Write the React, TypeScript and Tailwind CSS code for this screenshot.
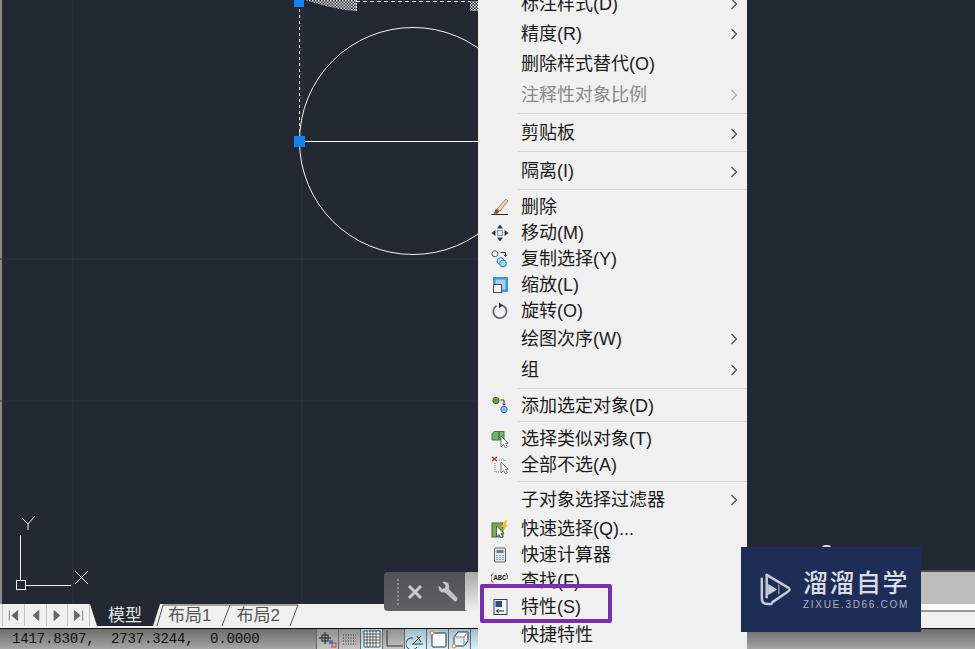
const cjk = "font-['Liberation_Sans','Noto_Sans_CJK_SC',sans-serif]";

type Row = { label: string; h: string; icon?: string; arrow?: boolean; dim?: boolean };

// row heights differ through the menu, same as the source app
const sections: { gap: string; rows: Row[] }[] = [
  {
    gap: "pb-[3px]",
    rows: [
      { label: "标注样式(D)", h: "h-[30px]", arrow: true },
      { label: "精度(R)", h: "h-[30px]", arrow: true },
      { label: "删除样式替代(O)", h: "h-[31px]" },
      { label: "注释性对象比例", h: "h-[30px]", arrow: true, dim: true },
    ],
  },
  { gap: "", rows: [{ label: "剪贴板", h: "h-[37px] pt-[2px]", arrow: true }] },
  { gap: "", rows: [{ label: "隔离(I)", h: "h-[37px] pt-[2px]", arrow: true }] },
  {
    gap: "pt-[4px] pb-[2px]",
    rows: [
      { label: "删除", h: "h-[26px]", icon: "erase" },
      { label: "移动(M)", h: "h-[26px]", icon: "move" },
      { label: "复制选择(Y)", h: "h-[26px]", icon: "copy" },
      { label: "缩放(L)", h: "h-[26px]", icon: "scale" },
      { label: "旋转(O)", h: "h-[26px]", icon: "rotate" },
      { label: "绘图次序(W)", h: "h-[30px]", arrow: true },
      { label: "组", h: "h-[32px]", arrow: true },
    ],
  },
  { gap: "", rows: [{ label: "添加选定对象(D)", h: "h-[32px] pt-[2px]", icon: "add" }] },
  {
    gap: "pt-[4px] pb-[3px]",
    rows: [
      { label: "选择类似对象(T)", h: "h-[26px]", icon: "similar" },
      { label: "全部不选(A)", h: "h-[26px]", icon: "none" },
    ],
  },
  {
    gap: "",
    rows: [
      { label: "子对象选择过滤器", h: "h-[34px] pt-[2px]", arrow: true },
      { label: "快速选择(Q)...", h: "h-[26px]", icon: "quick" },
      { label: "快速计算器", h: "h-[26px]", icon: "calc" },
      { label: "查找(F)...", h: "h-[26px]", icon: "find" },
      { label: "特性(S)", h: "h-[26px]", icon: "props" },
      { label: "快捷特性", h: "h-[30px]" },
    ],
  },
];

const cursor = "M10 6 V17 L12.5 14.5 L14.5 17.8 L16.3 16.8 L14.5 13.6 L17.2 13.2 Z";

function MenuIcon({ name }: { name: string }) {
  const cls = "w-[18px] h-[18px]";
  if (name === "erase")
    return (
      <svg viewBox="0 0 18 18" className={cls}>
        <path d="M6 11 L15 1 L17 3 L9 13 Z" fill="#e4d6ba" stroke="#8d7a58" strokeWidth="0.8" />
        <path d="M5 10.5 L8.5 13.5 L6 16 L2.5 15.5 Z" fill="#b4481f" />
        <path d="M0.5 16.5 H17" stroke="#2c2c2c" strokeWidth="1" />
      </svg>
    );
  if (name === "move")
    return (
      <svg viewBox="0 0 18 18" className={cls}>
        <path d="M9 0.5 L12 4.5 H6 Z M9 17.5 L6 13.5 H12 Z M0.5 9 L4.5 6 V12 Z M17.5 9 L13.5 12 V6 Z" fill="#2f3740" />
        <rect x="6.5" y="6.5" width="5" height="5" fill="#e4e8ec" stroke="#47525d" strokeDasharray="1.2 0.8" />
      </svg>
    );
  if (name === "copy")
    return (
      <svg viewBox="0 0 18 18" className={cls}>
        <circle cx="4" cy="3.8" r="3" fill="#f4f4f4" stroke="#5a6570" />
        <path d="M9.5 2.5 H14.5 V6 M13 4.8 L14.5 6.5 L16 4.8" fill="none" stroke="#333" />
        <circle cx="9.5" cy="11" r="3.4" fill="#cfe6f8" stroke="#2a78c2" />
        <circle cx="12" cy="13.5" r="3.4" fill="#a8d2f2" stroke="#2a78c2" />
      </svg>
    );
  if (name === "scale")
    return (
      <svg viewBox="0 0 18 18" className={cls}>
        <rect x="2" y="1" width="15" height="15" fill="#3d97dc" />
        <rect x="4.5" y="3.5" width="10" height="10" fill="#a9d2f0" />
        <rect x="2.5" y="8.5" width="8" height="8" fill="#f6f6f6" stroke="#3f4a55" />
      </svg>
    );
  if (name === "rotate")
    return (
      <svg viewBox="0 0 18 18" className={cls}>
        <path d="M5.5 3.8 A6.6 6.6 0 1 0 12 3.6" fill="none" stroke="#606970" strokeWidth="1.8" />
        <path d="M8 0.5 L12.5 3.6 L8 6 Z" fill="#30373d" />
      </svg>
    );
  if (name === "add")
    return (
      <svg viewBox="0 0 18 18" className={cls}>
        <circle cx="5" cy="3.5" r="3.2" fill="#6a9a4c" stroke="#46702f" />
        <circle cx="13" cy="12.5" r="3.2" fill="#7dbbea" stroke="#2a78c2" />
        <path d="M9.5 3 H13 V8 M11.6 6.6 L13 8.4 L14.4 6.6" fill="none" stroke="#333" />
      </svg>
    );
  if (name === "similar")
    return (
      <svg viewBox="0 0 18 18" className={cls}>
        <path d="M1 4 L3 1.5 H13 V10 H1 Z" fill="#72b36c" stroke="#3f7a3b" />
        <path d="M8 2 V10" stroke="#2f5d2c" />
        <path d={cursor} fill="#fff" stroke="#555" strokeWidth="0.8" />
      </svg>
    );
  if (name === "none")
    return (
      <svg viewBox="0 0 18 18" className={cls}>
        <path d="M1 1 L6 5 M6 1 L1 5" stroke="#c8242c" strokeWidth="1.4" />
        <path d="M4 7 V16 H9 M8 4 H14 V6" fill="none" stroke="#5f9a4a" strokeDasharray="1 1" />
        <path d={cursor} fill="#fff" stroke="#555" strokeWidth="0.8" />
      </svg>
    );
  if (name === "quick")
    return (
      <svg viewBox="0 0 18 18" className={cls}>
        <rect x="1" y="3" width="11" height="14" fill="#7fa65a" stroke="#47682f" />
        <path d="M13.5 0.5 L10.5 7 H13 L11.5 11 L17 5 H14.5 L16.5 0.5 Z" fill="#efc23a" />
        <path d="M5.5 6 V17 L8 14.5 L10 17.8 L11.8 16.8 L10 13.6 L12.7 13.2 Z" fill="#fff" stroke="#444" strokeWidth="0.8" />
      </svg>
    );
  if (name === "calc")
    return (
      <svg viewBox="0 0 18 18" className={cls}>
        <rect x="3.5" y="2" width="11" height="14" rx="1" fill="#e8ebee" stroke="#5b646d" />
        <rect x="5.5" y="4" width="7" height="3" fill="#6f7a84" />
        <path d="M5.5 9.5 H12.5 M5.5 11.5 H12.5 M5.5 13.5 H12.5" stroke="#4d565f" strokeDasharray="1 2" />
      </svg>
    );
  if (name === "find")
    return (
      <svg viewBox="0 0 18 18" className={cls}>
        <path d="M2.5 1 A6 6 0 0 0 2.5 11" fill="none" stroke="#444" />
        <path d="M15 1 A6 6 0 0 1 16 7" fill="none" stroke="#444" />
        <text x="2.5" y="8" fontSize="7" fontWeight="700" fill="#222" fontFamily="Liberation Mono">ABC</text>
      </svg>
    );
  return (
    <svg viewBox="0 0 18 18" className={cls}>
      <rect x="3" y="1.5" width="13" height="15" fill="#f3f5f8" stroke="#33415a" />
      <rect x="4.5" y="3" width="6.5" height="6" fill="#2d4a86" />
      <path d="M5.5 13 H13 M5.5 13 L7.5 11.5 M5.5 13 L7.5 14.5" fill="none" stroke="#222" />
    </svg>
  );
}

function MenuRow({ row }: { row: Row }) {
  return (
    <div className={`flex items-center ${row.h}`}>
      <div className="w-[43px] flex justify-center">{row.icon ? <MenuIcon name={row.icon} /> : null}</div>
      <span className={`flex-1 text-[18px] whitespace-nowrap ${row.dim ? "text-[#8a8a8a]" : ""}`}>{row.label}</span>
      {row.arrow ? (
        <svg viewBox="0 0 8 12" className="mr-[9px] w-[8px] h-[12px]">
          <path d="M1.5 1 L6.5 6 L1.5 11" fill="none" stroke={row.dim ? "#aaa" : "#4a4a4a"} strokeWidth="1.2" />
        </svg>
      ) : null}
    </div>
  );
}

function Menu() {
  return (
    <div className="absolute left-[478px] top-0 w-[269px] h-[649px] bg-[#f0f0f0] text-[#1c1c1c] overflow-hidden">
      <div className="-mt-[11px] flex flex-col">
        {sections.map((s, i) => (
          <div key={i} className="flex flex-col">
            {i > 0 ? <div className="ml-[40px] h-px bg-[#d6d6d6]" /> : null}
            <div className={`flex flex-col ${s.gap}`}>
              {s.rows.map((r) => (
                <MenuRow key={r.label} row={r} />
              ))}
            </div>
          </div>
        ))}
      </div>
    </div>
  );
}

function Drawing() {
  return (
    <svg className="absolute left-0 top-0 w-[478px] h-[604px]" viewBox="0 0 478 604">
      <defs>
        <pattern id="hatch" width="3" height="3" patternUnits="userSpaceOnUse">
          <rect width="3" height="3" fill="#222933" />
          <rect width="1.5" height="1.5" fill="#f0f0f0" />
          <rect x="1.5" y="1.5" width="1.5" height="1.5" fill="#e0e0e0" />
        </pattern>
      </defs>
      <rect x="0" y="0" width="2" height="604" fill="#8c8c8c" />
      <path d="M73 0 V604 M302 0 V604 M0 259 H478 M0 401 H478" stroke="#2c343e" strokeWidth="1" />
      <circle cx="413" cy="141" r="113.5" fill="none" stroke="#f2f2f2" strokeWidth="1" />
      <path d="M300 141.5 H478" stroke="#f5f5f5" strokeWidth="1.2" />
      <path d="M299.5 3 V141" stroke="#f2f2f2" strokeDasharray="3 3" />
      <path d="M356 1.5 H470" stroke="#f2f2f2" strokeDasharray="4 3" />
      <path d="M305 0 H356 V11 L345 10 L330 7 L318 4 Z M470 1 H478 V11 H470 Z" fill="url(#hatch)" />
      <path d="M356.5 0 V11" stroke="#f2f2f2" strokeDasharray="2 1" />
      <rect x="294" y="-3" width="10" height="10" fill="#1282f0" />
      <rect x="294" y="136" width="11" height="11" fill="#1282f0" />
      {/* ucs marker */}
      <path d="M20.5 535 V580 M26 585.5 H71" stroke="#f2f2f2" strokeWidth="1" />
      <rect x="16.5" y="580.5" width="9" height="9" fill="none" stroke="#f2f2f2" />
      <path d="M22 518 L28 524 L35 516 M28 524 V530 M75 571 L88 584 M88 571 L75 584" fill="none" stroke="#f2f2f2" strokeWidth="1" />
    </svg>
  );
}

const navIcons = [
  "M4 3 V15 M14 3 L7 9 L14 15 Z",
  "M13 3 L6 9 L13 15 Z",
  "M6 3 L13 9 L6 15 Z",
  "M4 3 L11 9 L4 15 Z M14 3 V15",
];

function Tabs() {
  return (
    <div className="relative flex-1 flex items-start bg-[#f0f0f0]">
      <svg className="absolute left-[90px] top-0 w-[230px] h-[24px]" viewBox="0 0 230 24">
        <path d="M0 0 H70 L63 22 H7 Z" fill="#222933" />
        <path d="M67 22 L73 1 H208 M132 22 L140 1 M200 22 L208 1" fill="none" stroke="#555" />
      </svg>
      <div className="flex h-[22px] ml-[2px] w-[88px] border-x border-[#c4c4c4]">
        {navIcons.map((d) => (
          <div key={d} className="flex-1 flex items-center justify-center border-r border-[#c4c4c4] last:border-r-0">
            <svg viewBox="0 0 18 18" className="w-[15px] h-[15px]">
              <path d={d} fill="#666" stroke="#666" />
            </svg>
          </div>
        ))}
      </div>
      <span className="relative ml-[18px] text-[17px] leading-[23px] text-[#e4e4e4]">模型</span>
      <span className="relative ml-[26px] text-[17px] leading-[23px] text-[#555]">布局1</span>
      <span className="relative ml-[25px] text-[17px] leading-[23px] text-[#555]">布局2</span>
    </div>
  );
}

function StatusCell({ lit, children }: { lit?: boolean; children: React.ReactNode }) {
  return (
    <div
      className={`w-[22px] flex items-center justify-center border-l border-[#666] bg-gradient-to-b ${
        lit ? "from-[#9fbcc8] to-[#d6f2fb]" : "from-[#8f8f8f] to-[#c6c6c6]"
      }`}
    >
      <svg viewBox="0 0 20 20" className="w-[20px] h-[20px]">
        {children}
      </svg>
    </div>
  );
}

function StatusBar() {
  return (
    <div className="h-[21px] border-t border-[#111] bg-gradient-to-b from-[#6c6c6c] to-[#a6a6a6] flex items-stretch">
      <span className="ml-[12px] w-[304px] font-['Liberation_Mono',monospace] text-[14px] tracking-[-0.15px] leading-[20px] text-[#111] whitespace-pre">
        1417.8307,  2737.3244,  0.0000
      </span>
      <div className="flex">
        <StatusCell>
          <path d="M1 9 H13 M7 3 V15" stroke="#222" fill="none" />
          <rect x="4" y="6" width="6" height="6" fill="none" stroke="#222" />
          <rect x="11" y="11" width="4" height="4" fill="#4a78c8" />
          <rect x="14" y="14" width="4" height="4" fill="none" stroke="#c8423a" />
        </StatusCell>
        <StatusCell>
          <path d="M3 6 H16 M3 9 H16 M3 12 H16 M3 15 H16" stroke="#333" strokeDasharray="1 1.5" />
        </StatusCell>
        <StatusCell lit>
          <rect x="2" y="2" width="16" height="16" fill="#fff" />
          <path d="M2 2 H18 V18 H2 Z M5 2 V18 M8 2 V18 M11 2 V18 M14 2 V18 M2 5 H18 M2 8 H18 M2 11 H18 M2 14 H18" fill="none" stroke="#333" strokeWidth="0.8" />
        </StatusCell>
        <StatusCell>
          <path d="M3 1 V17 H19" fill="none" stroke="#333" />
        </StatusCell>
        <StatusCell lit>
          <path d="M6 15 H17 M7 15 L15 7 M11 7 L15 13" fill="none" stroke="#333" />
          <path d="M7 9 A6 6 0 1 0 11 18" fill="none" stroke="#333" />
        </StatusCell>
        <StatusCell lit>
          <rect x="4" y="4" width="14" height="14" rx="1" fill="#f6fbfd" stroke="#333" />
          <circle cx="4" cy="4" r="2" fill="#fff" stroke="#d8773a" />
        </StatusCell>
        <StatusCell lit>
          <path d="M4 8 L8 3 H18 V12 L14 17 H4 Z" fill="#eef4f8" stroke="#333" />
          <path d="M4 8 H14 V17 M14 8 L18 3" fill="#dfe9ef" stroke="#888" />
          <circle cx="4" cy="17" r="2" fill="#fff" stroke="#d8773a" />
        </StatusCell>
        <StatusCell lit>
          <path d="M14 10 L18 16 H10 Z" fill="#222" />
        </StatusCell>
      </div>
    </div>
  );
}

function CommandBar() {
  return (
    <div className="absolute left-[384px] top-[572px] w-[94px] h-[39px] bg-gradient-to-b from-[#4f5355] to-[#5f6162] rounded-l-[4px] flex items-center">
      <div className="ml-[13px] h-[26px] border-l-2 border-dotted border-[#8f8f8f]" />
      <svg viewBox="0 0 16 16" className="ml-[8px] w-[16px] h-[16px]">
        <path d="M2 2 L14 14 M14 2 L2 14" stroke="#c9c9c9" strokeWidth="3" />
      </svg>
      <svg viewBox="0 0 24 24" className="ml-[14px] w-[21px] h-[21px]">
        <path d="M2 5 L6 9 L9 8 L10 5 L6 1 Q12 0 13.5 4 Q14.5 7 13.5 9 L23 19 Q24 21 22 23 Q20 24 19 22 L9 13 Q5 14 3 11 Q1 8 2 5 Z" fill="#c4c4c4" />
      </svg>
      <div className="ml-auto w-[13px] h-full rounded-l-[2px] bg-gradient-to-b from-[#a8a8a8] to-[#f0f0f0]" />
    </div>
  );
}

function Watermark() {
  return (
    <div className="absolute left-[741px] top-[547px] w-[180px] h-[85px] bg-[#1e2d55] flex items-center pl-[15px] gap-[12px]">
      <svg viewBox="0 0 36 36" className="w-[35px] h-[35px]">
        <path d="M6 7 V27 Q6 33 12 33 H16 M11 3 L33 16 Q36 18 33 20 L17 31" fill="none" stroke="#c4cad6" strokeWidth="2.6" strokeLinecap="round" />
        <path d="M13 13 L21 18 L13 23 Z M23.5 13 V23" fill="#c4cad6" stroke="#c4cad6" />
        <path d="M11 3 V26" stroke="#c4cad6" strokeWidth="2.6" strokeLinecap="round" />
      </svg>
      <div className="flex flex-col items-start">
        <span className="text-[25px] leading-[29px] tracking-[1.5px] font-medium text-[#d8dce4]">溜溜自学</span>
        <span className="mt-[1px] text-[10px] leading-[11px] tracking-[1.7px] text-[#aab2c2]">ZIXUE.3D66.COM</span>
      </div>
    </div>
  );
}

export default function App() {
  return (
    <div className={`relative w-[975px] h-[649px] overflow-hidden flex flex-col bg-[#222933] ${cjk}`}>
      <div className="relative h-[604px] flex flex-col justify-end items-end">
        <Drawing />
        <div className="w-[228px] h-[34px] border-t-2 border-[#4a4e52] bg-[#bdbdbd]" />
      </div>
      <div className="h-[24px] flex">
        <Tabs />
        <div className="w-[228px] flex flex-col bg-[#f0f0f0]">
          <div className="h-[6px] bg-[#fafafa]" />
          <div className="h-[2px] bg-[#9a9a9a]" />
        </div>
      </div>
      <StatusBar />
      <CommandBar />
      <Menu />
      <div className="absolute left-[480px] top-[584px] w-[132px] h-[39px] border-[4px] border-[#7b2cb0] rounded-[2px]" />
      <div className="absolute left-[822px] top-[545px] w-[9px] h-[3px] rounded-t-full bg-[#d8d8d8]" />
      <Watermark />
    </div>
  );
}
